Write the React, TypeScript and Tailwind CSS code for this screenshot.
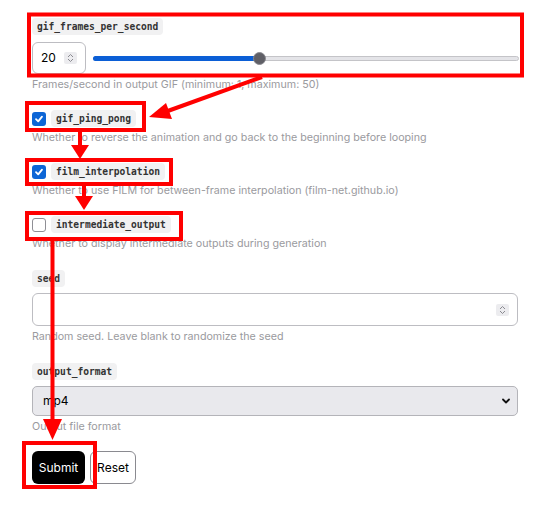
import React from 'react';

const mono = { fontFamily: '"DejaVu Sans Mono", "Liberation Mono", monospace' };
const sans = { fontFamily: 'Inter, "Noto Sans", sans-serif' };

function Chip({ children }: { children: React.ReactNode }) {
  return (
    <div
      className="flex h-[17px] w-fit items-center rounded-[4px] bg-[#f1f1f2] px-[5px] text-[9.6px] font-semibold leading-none text-[#333]"
      style={mono}
    >
      {children}
    </div>
  );
}

function Help({ children }: { children: React.ReactNode }) {
  return <p className="mt-[3px] h-[16px] text-[10.7px] leading-[16px] text-[#9a9a9e]">{children}</p>;
}

function Spinner() {
  return (
    <span className="flex h-[12px] w-[13px] items-center justify-center rounded-[2px] bg-[#ececef]">
      <svg width="7" height="10" viewBox="0 0 7 10" fill="none" stroke="#8a8a90" strokeWidth="1">
        <path d="M1 4 L3.5 1.5 L6 4" />
        <path d="M1 6 L3.5 8.5 L6 6" />
      </svg>
    </span>
  );
}

function CheckRow({ label, checked }: { label: string; checked: boolean }) {
  return (
    <div className="flex h-[17px] items-center gap-[5px]">
      {checked ? (
        <span className="flex h-[14px] w-[14px] items-center justify-center rounded-[3px] bg-[#0d66d6]">
          <svg width="10" height="10" viewBox="0 0 10 10" fill="none" stroke="white" strokeWidth="1.8" strokeLinecap="round" strokeLinejoin="round">
            <path d="M2 5.2 L4.2 7.4 L8 2.6" />
          </svg>
        </span>
      ) : (
        <span className="h-[14px] w-[14px] rounded-[3px] border border-[#8f8f95] bg-white" />
      )}
      <Chip>{label}</Chip>
    </div>
  );
}

function Annotations() {
  const red = '#ff0000';
  return (
    <svg className="pointer-events-none absolute left-0 top-0" width="560" height="506" viewBox="0 0 560 506">
      <g fill="none" stroke={red} strokeWidth="4">
        <rect x="29" y="14.5" width="493" height="61" />
        <rect x="27" y="103" width="117" height="27" />
        <rect x="27" y="160" width="144" height="24" />
        <rect x="27" y="213" width="154" height="26" />
        <rect x="24" y="443" width="71" height="44" />
        <line x1="262" y1="77" x2="165" y2="112" />
        <line x1="80" y1="132" x2="80" y2="146" />
        <line x1="84" y1="185" x2="84" y2="198" />
        <line x1="52.5" y1="239" x2="52.5" y2="421" />
      </g>
      <g fill={red}>
        <polygon points="149,117 166,103 172,119" />
        <polygon points="71,145 89,145 80,159" />
        <polygon points="75,196 93,196 84,210" />
        <polygon points="43,419 62,419 52.5,440" />
      </g>
    </svg>
  );
}

export default function App() {
  return (
    <div className="relative h-[506px] w-[560px] overflow-hidden bg-white" style={sans}>
      <div className="ml-[32px] w-[487px] pt-[18px]">
        {/* gif_frames_per_second */}
        <Chip>gif_frames_per_second</Chip>
        <div className="mt-[7px] flex items-center">
          <div className="flex h-[32px] w-[54px] items-center justify-between rounded-[6px] border border-[#bdbdc2] pl-[8px] pr-[8px]">
            <span className="text-[12px] text-black">20</span>
            <Spinner />
          </div>
          <div className="relative ml-[7px] flex h-[14px] flex-1 items-center">
            <div className="h-[5px] w-full rounded-full border border-[#c4c4c8] bg-[#e4e4e8]" />
            <div className="absolute left-0 h-[5px] w-[167px] rounded-full bg-[#0b5fd6]" />
            <div className="absolute left-[160px] h-[13px] w-[13px] rounded-full border border-[#8a8a90] bg-[#5f5f66]" />
          </div>
        </div>
        <Help>Frames/second in output GIF (minimum: 1, maximum: 50)</Help>

        <div className="mt-[17px]">
          <CheckRow label="gif_ping_pong" checked />
          <Help>Whether to reverse the animation and go back to the beginning before looping</Help>
        </div>
        <div className="mt-[17px]">
          <CheckRow label="film_interpolation" checked />
          <Help>Whether to use FILM for between-frame interpolation (film-net.github.io)</Help>
        </div>
        <div className="mt-[17px]">
          <CheckRow label="intermediate_output" checked={false} />
          <Help>Whether to display intermediate outputs during generation</Help>
        </div>

        {/* seed */}
        <div className="mt-[18px]">
          <Chip>seed</Chip>
          <div className="mt-[6px] flex h-[33px] w-[486px] items-center justify-end rounded-[6px] border border-[#bdbdc2] pr-[8px]">
            <Spinner />
          </div>
          <Help>Random seed. Leave blank to randomize the seed</Help>
        </div>

        {/* output_format */}
        <div className="mt-[18px]">
          <Chip>output_format</Chip>
          <div className="mt-[6px] flex h-[30px] w-[486px] items-center justify-between rounded-[5px] border border-[#b4b4b9] bg-[#e9e9ed] pl-[10px] pr-[6px]">
            <span className="text-[12px] text-black">mp4</span>
            <svg width="10" height="8" viewBox="0 0 10 8" fill="none" stroke="#111" strokeWidth="1.8" strokeLinecap="round" strokeLinejoin="round">
              <path d="M2 2.5 L5 5.5 L8 2.5" />
            </svg>
          </div>
          <Help>Output file format</Help>
        </div>

        <div className="mt-[16px] flex gap-[5px]">
          <button className="h-[33px] w-[53px] rounded-[6px] bg-black text-[12px] text-white">Submit</button>
          <button className="h-[33px] w-[46px] rounded-[6px] border border-[#8a8a90] bg-white text-[12px] text-black">Reset</button>
        </div>
      </div>
      <Annotations />
    </div>
  );
}
